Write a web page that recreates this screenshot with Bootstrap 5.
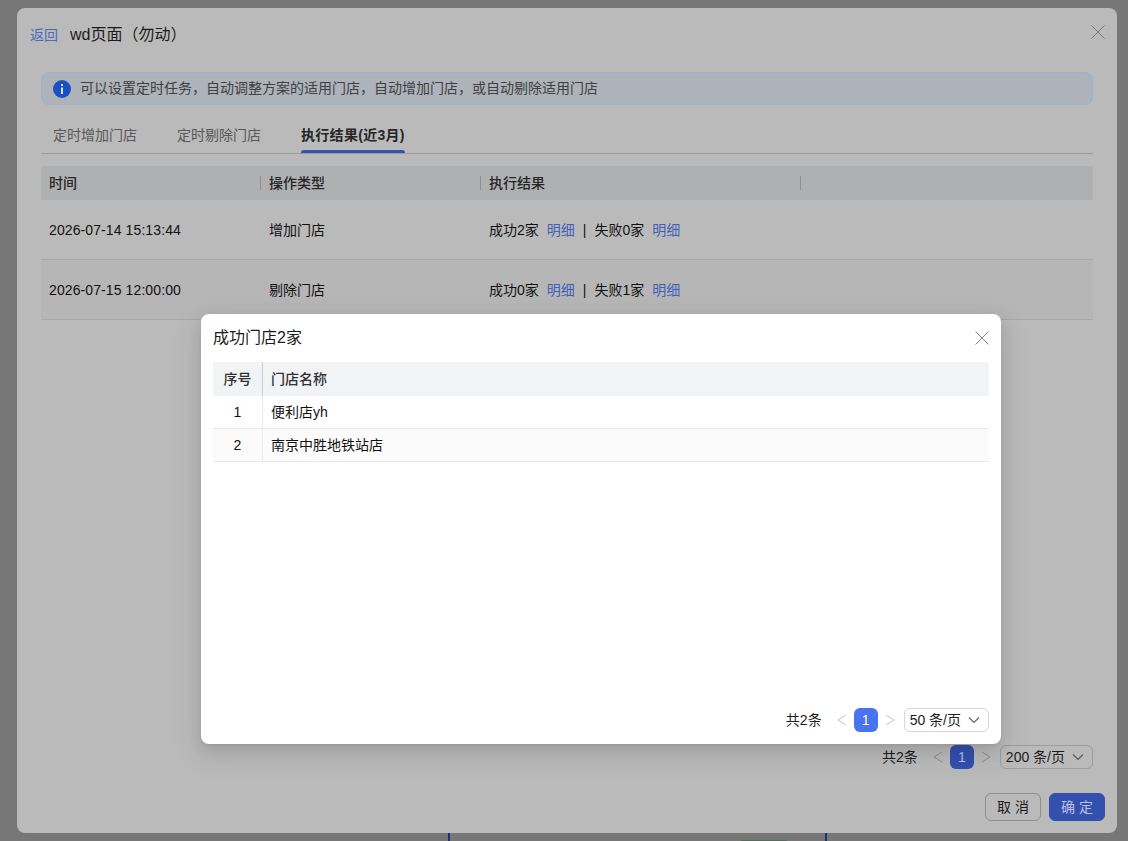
<!DOCTYPE html>
<html lang="zh-CN">
<head>
<meta charset="UTF-8">
<meta name="viewport" content="width=device-width, initial-scale=1.0">
<title>wd页面（勿动）</title>
<link href="https://cdn.jsdelivr.net/npm/bootstrap@5.3.3/dist/css/bootstrap.min.css" rel="stylesheet">
<style>
  html, body { height: 100%; }
  body {
    background: #777;
    font-family: "Liberation Sans", "Noto Sans CJK SC", sans-serif;
    font-size: 14px;
    color: #1c1c1c;
    overflow: hidden;
    position: relative;
  }
  /* bits of the page under the dialogs */
  .under-line { position: absolute; top: 833px; width: 2px; height: 8px; background: #1f2f70; }
  .under-pill { position: absolute; top: 840px; left: 740px; width: 48px; height: 6px; border-radius: 6px; background: #4f6f5d; }

  .outer-win {
    position: absolute; left: 17px; top: 8px; width: 1100px; height: 825px;
    background: #bababa; border: 0; border-radius: 8px;
  }
  .outer-head { height: 52px; padding: 2px 13px 0; }
  .back-link { color: #4e6bb8; text-decoration: none; margin-right: 12px; }
  .win-title { font-size: 16px; color: #1c1c1c; }
  .x-btn { background: none; border: 0; padding: 0; line-height: 0; }
  .outer-head .x-btn { margin-left: auto; margin-right: -1px; margin-top: -6px; }
  .outer-body { padding: 12px 24px 0; }

  .tip-bar {
    height: 33px; padding: 0 11px; margin: 0;
    background: #aeb2bb; border: 1px solid #9fb1cf; border-radius: 8px; color: #404040;
  }
  .tip-ico { width: 18px; height: 18px; margin-right: 9px; flex: none; }

  .tab-row { height: 49px; border-bottom: 1px solid #9b9b9b; padding-left: 12px; gap: 40px; flex-wrap: nowrap; }
  .tab-row .nav-link {
    padding: 20px 0 0; height: 48px; line-height: 20px; color: #585858; background: none;
    border: 0; border-radius: 0; position: relative;
  }
  .tab-row .nav-link.active { color: #262626; font-weight: 700; letter-spacing: .3px; }
  .tab-row .nav-link.active::after {
    content: ""; position: absolute; left: 0; right: 0; bottom: 0; height: 3px;
    background: #3450ae; border-radius: 3px 3px 0 0;
  }

  .res-table { table-layout: fixed; width: 1052px; margin: 12px 0 0; --bs-table-bg: transparent; border-collapse: separate; border-spacing: 0; }
  .res-table > * > tr > * { border-bottom: 1px solid #a9a9a9; padding: 0 8px; vertical-align: middle; color: #111; box-shadow: none; }
  .res-table th { background: #afb0b2; height: 34px; font-weight: 500; border-bottom: 0 !important; position: relative; color: #262626 !important; }
  .res-table th.sep::after {
    content: ""; position: absolute; right: 0; top: 10px; height: 14px; width: 1px; background: #8d8f93;
  }
  .res-table td { height: 60px; padding-top: 1px !important; }
  .res-table td:first-child { letter-spacing: .1px; }
  .res-table tr.alt td { background: #b6b6b6; }
  .res-table a { color: #3f5fb8; text-decoration: none; margin: 0 8px; }
  .res-table .pipe { margin-right: 8px; }

  .pager-total { margin-right: 8px; color: #1c1c1c; }
  .arrow-btn { width: 24px; height: 24px; flex: none; }
  .pg-no {
    width: 24px; height: 24px; border-radius: 6px; text-align: center; line-height: 24px;
    background: #3450ae; color: #b9c3e2; flex: none;
  }
  .pg-size {
    height: 24px; padding: 0 8px 0 5px; margin-left: 2px; border: 1px solid #9d9d9d; border-radius: 6px;
    color: #1c1c1c; white-space: nowrap; gap: 7px;
  }
  .outer-pager { position: absolute; right: 24px; top: 737px; }
  .outer-foot { position: absolute; right: 12px; top: 785px; gap: 8px; }
  .foot-btn { width: 56px; height: 28px; padding: 0; font-size: 14px; line-height: 26px; border-radius: 6px; }
  .foot-btn.plain { background: none; border: 1px solid #8e8e8e; color: #1c1c1c; }
  .foot-btn.main { background: #3450ae; border: 1px solid #3450ae; color: #b9c3e2; }

  .inner-win {
    position: absolute; left: 201px; top: 314px; width: 800px; height: 430px;
    background: #fff; border: 0; border-radius: 8px; padding: 0 12px;
    box-shadow: 0 6px 16px 0 rgba(0,0,0,.1), 0 3px 6px -4px rgba(0,0,0,.14), 0 9px 28px 8px rgba(0,0,0,.06);
  }
  .inner-head { height: 48px; }
  .inner-head .x-btn { margin-left: auto; }
  .store-table { table-layout: fixed; width: 776px; margin: 0; --bs-table-bg: transparent; border-collapse: separate; border-spacing: 0; }
  .store-table > * > tr > * { padding: 0 8px; vertical-align: middle; color: #111; border-bottom: 1px solid #e9eaeb; box-shadow: none; }
  .store-table th { background: #f2f3f5; height: 34px; font-weight: 500; border-bottom: 0 !important; color: #303133 !important; }
  .store-table td { height: 33px; }
  .store-table .idx { width: 50px; text-align: center; border-right: 1px solid #e9eaeb; }
  .store-table th.idx { border-right: 1px solid #c9ccd1; }
  .store-table tr.alt td { background: #fafbfa; }
  .inner-pager { position: absolute; right: 12px; top: 394px; }
  .inner-pager .pg-no { background: #4a73ee; color: #fff; }
  .inner-pager .pg-size { border-color: #d5d5d5; background: #fff; }
</style>
</head>
<body>
<div class="under-line" style="left: 448px"></div>
<div class="under-line" style="left: 825px"></div>
<div class="under-pill"></div>

<div class="card outer-win">
  <div class="outer-head d-flex align-items-center">
    <a class="back-link" href="#">返回</a>
    <span class="win-title">wd页面（勿动）</span>
    <button class="x-btn" type="button" aria-label="关闭">
      <svg width="14" height="14" viewBox="0 0 14 14"><path d="M.5.5l13 13M13.5.5l-13 13" stroke="#787878" fill="none"/></svg>
    </button>
  </div>
  <div class="outer-body">
    <div class="alert tip-bar d-flex align-items-center" role="alert">
      <svg class="tip-ico" viewBox="0 0 18 18"><circle cx="9" cy="9" r="9" fill="#1a50c4"/><rect x="8" y="4" width="2" height="2" fill="#d8e0f2"/><rect x="8" y="7.5" width="2" height="6.5" fill="#d8e0f2"/></svg>
      可以设置定时任务，自动调整方案的适用门店，自动增加门店，或自动剔除适用门店
    </div>
    <ul class="nav tab-row">
      <li class="nav-item"><a class="nav-link" href="#">定时增加门店</a></li>
      <li class="nav-item"><a class="nav-link" href="#">定时剔除门店</a></li>
      <li class="nav-item"><a class="nav-link active" href="#">执行结果(近3月)</a></li>
    </ul>
    <table class="table res-table">
      <colgroup><col style="width: 220px"><col style="width: 220px"><col style="width: 320px"><col></colgroup>
      <thead>
        <tr><th class="sep">时间</th><th class="sep">操作类型</th><th class="sep">执行结果</th><th></th></tr>
      </thead>
      <tbody>
        <tr><td>2026-07-14 15:13:44</td><td>增加门店</td><td>成功2家<a href="#">明细</a><span class="pipe">|</span>失败0家<a href="#">明细</a></td><td></td></tr>
        <tr class="alt"><td>2026-07-15 12:00:00</td><td>剔除门店</td><td>成功0家<a href="#">明细</a><span class="pipe">|</span>失败1家<a href="#">明细</a></td><td></td></tr>
      </tbody>
    </table>
  </div>

  <div class="outer-pager d-flex align-items-center">
    <span class="pager-total">共2条</span>
    <svg class="arrow-btn" viewBox="0 0 24 24"><path d="M16 7l-8 5 8 5" stroke="#8f8f8f" fill="none"/></svg>
    <span class="pg-no">1</span>
    <svg class="arrow-btn" viewBox="0 0 24 24"><path d="M8 7l8 5-8 5" stroke="#8f8f8f" fill="none"/></svg>
    <span class="pg-size d-flex align-items-center">200 条/页
      <svg width="12" height="8" viewBox="0 0 12 8"><path d="M1 1.5l5 5 5-5" stroke="#5a5a5a" stroke-width="1.2" fill="none"/></svg>
    </span>
  </div>
  <div class="outer-foot d-flex">
    <button class="btn foot-btn plain" type="button">取 消</button>
    <button class="btn foot-btn main" type="button">确 定</button>
  </div>
</div>

<div class="card inner-win">
  <div class="inner-head d-flex align-items-center">
    <span class="win-title">成功门店2家</span>
    <button class="x-btn" type="button" aria-label="关闭">
      <svg width="14" height="14" viewBox="0 0 14 14"><path d="M.5.5l13 13M13.5.5l-13 13" stroke="#8c8c8c" fill="none"/></svg>
    </button>
  </div>
  <table class="table store-table">
    <thead>
      <tr><th class="idx">序号</th><th>门店名称</th></tr>
    </thead>
    <tbody>
      <tr><td class="idx">1</td><td>便利店yh</td></tr>
      <tr class="alt"><td class="idx">2</td><td>南京中胜地铁站店</td></tr>
    </tbody>
  </table>
  <div class="inner-pager d-flex align-items-center">
    <span class="pager-total">共2条</span>
    <svg class="arrow-btn" viewBox="0 0 24 24"><path d="M16 7l-8 5 8 5" stroke="#c4c4c4" fill="none"/></svg>
    <span class="pg-no">1</span>
    <svg class="arrow-btn" viewBox="0 0 24 24"><path d="M8 7l8 5-8 5" stroke="#c4c4c4" fill="none"/></svg>
    <span class="pg-size d-flex align-items-center">50 条/页
      <svg width="12" height="8" viewBox="0 0 12 8"><path d="M1 1.5l5 5 5-5" stroke="#666" stroke-width="1.2" fill="none"/></svg>
    </span>
  </div>
</div>
<script src="https://cdn.jsdelivr.net/npm/bootstrap@5.3.3/dist/js/bootstrap.bundle.min.js"></script>
</body>
</html>
